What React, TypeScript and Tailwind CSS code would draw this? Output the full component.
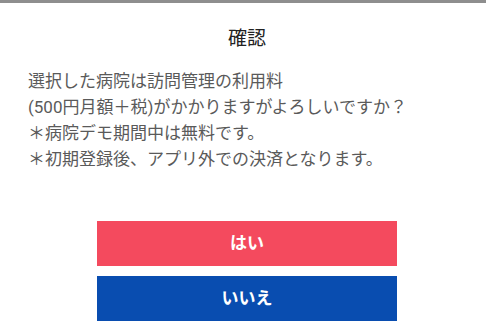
export default function App() {
  return (
    <div
      className="w-[486px] h-[331px] overflow-hidden bg-white border-t-[3px] border-[#8e8e8e]"
      style={{ fontFamily: 'Roboto, "Noto Sans CJK JP", sans-serif' }}
    >
      <div className="pl-2">
        <h1 className="pt-[21px] text-center text-[19px] leading-[30px] text-[#222]">確認</h1>
        <p className="mt-[14px] px-[20px] text-[17px] leading-[26px] text-[#5a5a5a]">
          選択した病院は訪問管理の利用料
          <br />
          (500円月額＋税)がかかりますがよろしいですか？
          <br />
          ＊病院デモ期間中は無料です。
          <br />
          ＊初期登録後、アプリ外での決済となります。
        </p>
        <div className="mt-[49px] flex flex-col items-center gap-[10px]">
          <button className="w-[300px] h-[45px] bg-[#f44a5e] text-white font-bold text-[17px]">
            はい
          </button>
          <button className="w-[300px] h-[45px] bg-[#094db0] text-white font-bold text-[17px]">
            いいえ
          </button>
        </div>
      </div>
    </div>
  );
}
